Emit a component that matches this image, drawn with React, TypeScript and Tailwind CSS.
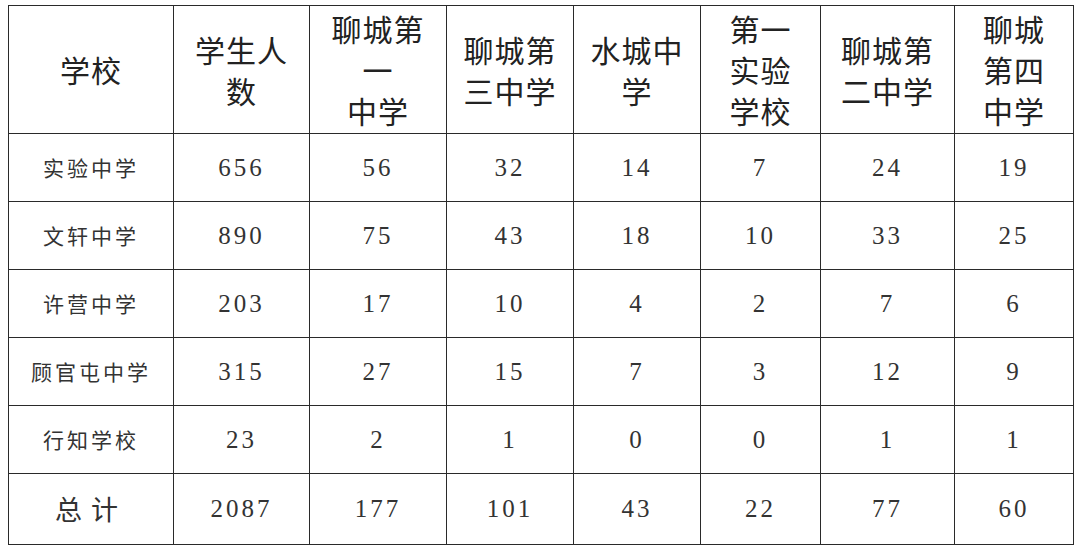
const headers: string[][] = [
  ['学校'],
  ['学生人', '数'],
  ['聊城第', '一', '中学'],
  ['聊城第', '三中学'],
  ['水城中', '学'],
  ['第一', '实验', '学校'],
  ['聊城第', '二中学'],
  ['聊城', '第四', '中学'],
];

const rows: [string, number[]][] = [
  ['实验中学', [656, 56, 32, 14, 7, 24, 19]],
  ['文轩中学', [890, 75, 43, 18, 10, 33, 25]],
  ['许营中学', [203, 17, 10, 4, 2, 7, 6]],
  ['顾官屯中学', [315, 27, 15, 7, 3, 12, 9]],
  ['行知学校', [23, 2, 1, 0, 0, 1, 1]],
];

const totals = [2087, 177, 101, 43, 22, 77, 60];

const colWidths = [
  'w-[165px]',
  'w-[136px]',
  'w-[137px]',
  'w-[127px]',
  'w-[127px]',
  'w-[120px]',
  'w-[134px]',
  'w-[119px]',
];

const cell = 'border-[1.5px] border-[#2a2a2a] p-0 text-center align-middle';
const cjk = "font-['Noto_Sans_CJK_SC','Noto_Sans',sans-serif]";
const num = `${cell} font-['Liberation_Serif',serif] text-[25px] tracking-[3px] text-[#333]`;

const App = () => {
  return (
    <div className="w-[1080px] h-[551px] bg-white pt-[5px] pl-[8px]">
      <table className="table-fixed border-collapse w-[1065px] text-[#222]">
        <colgroup>
          {colWidths.map((w, i) => (
            <col key={i} className={w} />
          ))}
        </colgroup>
        <thead>
          <tr className="h-[128px]">
            {headers.map((lines, i) => (
              <th key={i} className={`${cell} ${cjk} font-normal text-[30px] leading-[41px] tracking-[1px]`}>
                {lines.map((l, j) => (
                  <div key={j}>{l}</div>
                ))}
              </th>
            ))}
          </tr>
        </thead>
        <tbody>
          {rows.map(([name, nums], r) => (
            <tr key={r} className="h-[68px]">
              <td className={`${cell} ${cjk} text-[21px] tracking-[3px] text-[#333]`}>{name}</td>
              {nums.map((n, i) => (
                <td key={i} className={num}>
                  {n}
                </td>
              ))}
            </tr>
          ))}
          {/* totals */}
          <tr className="h-[71px]">
            <td className={`${cell} ${cjk} text-[27px] tracking-[9px] text-[#333]`}>总计</td>
            {totals.map((n, i) => (
              <td key={i} className={num}>
                {n}
              </td>
            ))}
          </tr>
        </tbody>
      </table>
    </div>
  );
};

export default App;
